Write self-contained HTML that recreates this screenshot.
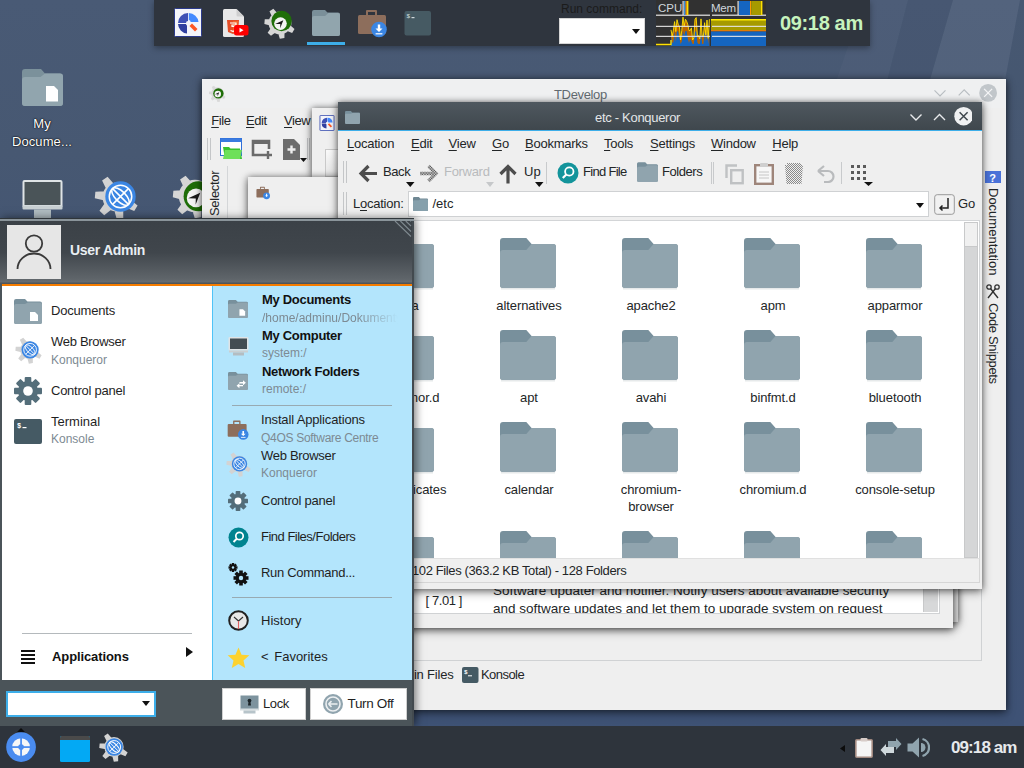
<!DOCTYPE html>
<html><head><meta charset="utf-8">
<style>
*{margin:0;padding:0;box-sizing:border-box}
html,body{width:1024px;height:768px;overflow:hidden}
body{position:relative;font-family:"Liberation Sans",sans-serif;font-size:13px;color:#1f1f1f;
background:linear-gradient(#495a75 0%,#475872 20%,#415374 50%,#3e5275 95%);}
.a{position:absolute}
.t{position:absolute;white-space:nowrap;line-height:1}
#rays{left:0;top:0;width:1024px;height:768px;overflow:hidden}
/* top panel */
#tp{left:154px;top:0;width:716px;height:46px;background:#2f353e;box-shadow:0 2px 6px rgba(0,0,0,.35)}
/* taskbar */
#tb{left:0;top:726px;width:1024px;height:42px;background:#2e343c}
/* windows */
.win{position:absolute;background:#efefef;box-shadow:0 0 6px rgba(0,0,0,.4),0 3px 9px rgba(0,0,0,.45)}
#tdev{left:202px;top:79px;width:804px;height:631px}
#small{left:312px;top:108px;width:200px;height:69px}
#q4os{left:248px;top:177px;width:705px;height:451px}
#q4b{left:262px;top:186px;width:696px;height:435.5px;background:#dadada}
#konq{left:338px;top:102px;width:644px;height:487px}
#menu{left:0;top:218px;width:414px;height:508px;background:#4b5459;box-shadow:2px 0 8px rgba(0,0,0,.5)}
u{text-decoration:underline;text-decoration-thickness:1px;text-underline-offset:1.5px}
</style></head>
<body>
<svg id="rays" class="a" style="left:0;top:0" width="1024" height="768"><polygon points="908,0 953,0 921.3,110 879.4,110" fill="#000" fill-opacity="0.025"/><polygon points="953,0 1020,0 999.5,110 921.3,110" fill="#fff" fill-opacity="0.06"/><polygon points="1020,0 1024,0 1024.0,110 999.5,110" fill="#000" fill-opacity="0.02"/><polygon points="864,0 908,0 879.4,110 826.2,110" fill="#fff" fill-opacity="0.025"/></svg>
<div id="desk" class="a" style="left:0;top:0;width:1024px;height:768px">
<svg class="a" style="left:22px;top:69px" width="41" height="37" viewBox="0 0 41 37"><path d="M0 3 Q0 0 3 0 L19 0 L23 4.5 L38 4.5 Q41 4.5 41 7.5 L41 34 Q41 37 38 37 L3 37 Q0 37 0 34 Z" fill="#7b919b"/><path d="M0 11 Q0 8 3 8 L18.5 8 L23 4.5 L38 4.5 Q41 4.5 41 7.5 L41 34 Q41 37 38 37 L3 37 Q0 37 0 34 Z" fill="#91a5ae"/><path d="M24 17 L32 17 L36 21 L36 32.5 L24 32.5 Z" fill="#fff"/></svg>
<div class="t" style="left:12px;top:117px;width:60px;text-align:center;font-size:13px;color:#fff;text-shadow:0 0 2px #000,0 0 1px #000">My</div>
<div class="t" style="left:8px;top:134.6px;width:68px;text-align:center;font-size:13px;color:#fff;text-shadow:0 0 2px #000,0 0 1px #000;letter-spacing:0.1px">Docume...</div>
<svg class="a" style="left:22px;top:180px" width="41" height="38" viewBox="0 0 41 38"><rect x="0.5" y="0" width="40" height="28" rx="2" fill="#dfe4e6"/><rect x="2.5" y="2" width="36" height="23" fill="#4a5458"/><rect x="0.5" y="25.5" width="40" height="4" rx="1" fill="#c8d0d3"/><rect x="12" y="29.5" width="17" height="8.5" fill="#b0bcc1"/></svg>
<svg class="a" style="left:94.2px;top:174px" width="46" height="46" viewBox="0 0 46 46"><path d="M8.48 23.00 a14.52 14.52 0 1 0 29.04 0 a14.52 14.52 0 1 0 -29.04 0Z M11.35 17.34 L1.37 17.80 L0.80 24.37 L10.54 26.55Z M11.31 28.58 L5.45 36.66 L10.23 41.21 L18.01 34.95Z M20.08 35.62 L22.74 45.24 L29.28 44.34 L29.23 34.35Z M31.04 33.15 L40.23 37.07 L43.60 31.40 L35.76 25.21Z M20.16 10.36 L13.58 2.84 L8.08 6.49 L12.46 15.47Z" fill="#d3d3d3"/><circle cx="26.50" cy="22.50" r="15.20" fill="#3b86e3"/><g fill="none" stroke="#fff" stroke-width="1.52"><circle cx="26.50" cy="22.50" r="11.25"/><ellipse cx="26.50" cy="22.50" rx="5.17" ry="11.25" transform="rotate(-45 26.50 22.50)"/><path d="M18.60 14.60 L34.40 30.40 M18.60 30.40 L34.40 14.60"/></g></svg>
<svg class="a" style="left:172.1px;top:173.4px" width="46" height="46" viewBox="0 0 46 46"><path d="M6.72 23.00 a16.28 16.28 0 1 0 32.56 0 a16.28 16.28 0 1 0 -32.56 0Z M9.81 17.21 L1.37 17.80 L0.80 24.37 L9.01 26.41Z M10.25 29.70 L5.45 36.66 L10.23 41.21 L16.95 36.07Z M20.29 37.14 L22.74 45.24 L29.28 44.34 L29.44 35.88Z M32.37 33.94 L40.23 37.07 L43.60 31.40 L37.09 25.99Z M19.31 9.08 L13.58 2.84 L8.08 6.49 L11.61 14.19Z" fill="#d6d6d6"/><circle cx="26.60" cy="23.30" r="15.00" fill="#1f6e08"/><circle cx="24.08" cy="24.89" r="9.30" fill="#f4f4f4"/><path d="M16.17 25.36 L28.27 19.77 L23.61 31.87 L23.80 25.48Z" fill="#1a1a1a"/></svg>
</div>
<div id="tp" class="a">
<svg class="a" style="left:20px;top:8px" width="28" height="30" viewBox="0 0 28 30">
<rect x="0.5" y="0.5" width="27" height="28" rx="1" fill="#f4f5fa" stroke="#2b3a8c" stroke-width="1"/>
<path d="M14 5 A10 10 0 0 0 4 15 L12 15 A2 2 0 0 1 14 13 Z" fill="#3f51b5"/>
<path d="M14.8 5 A10 10 0 0 1 24.5 14 L16.6 14 A2 2 0 0 0 14.8 12 Z" fill="#448aff"/>
<path d="M4 16 A10 10 0 0 0 13 25.5 L13 17.5 A2 2 0 0 1 12 16 Z" fill="#303f9f"/>
<path d="M15.5 18 L18 15.5 L23.5 21 L21 23.5 Z" fill="#ff5722"/>
</svg>
<svg class="a" style="left:68px;top:9px" width="28" height="29" viewBox="0 0 28 29">
<path d="M1 1.5 Q1 0 2.5 0 L14.5 0 L22 7.5 L22 26.5 Q22 28 20.5 28 L2.5 28 Q1 28 1 26.5 Z" fill="#e8e8e8"/>
<path d="M14.5 0 L14.5 6 Q14.5 7.5 16 7.5 L22 7.5 Z" fill="#cfcfcf"/>
<path d="M5 11 L17 11 L16 23 L11 25 L6 23 Z" fill="#e44d26"/>
<path d="M11 12 L16 12 L15.2 22.5 L11 24 Z" fill="#f16529"/>
<path d="M8 14 L14 14 L14 16 L10 16 L10 17.5 L13.8 17.5 L13.4 21.5 L11 22.3 L8.5 21.5" fill="none" stroke="#fff" stroke-width="1.2"/>
<rect x="12" y="16" width="14.5" height="10.5" rx="2.5" fill="#ff0000"/>
<path d="M17.5 18.8 L21.5 21.2 L17.5 23.6 Z" fill="#fff"/>
</svg>
<svg class="a" style="left:109.4px;top:5.8px" width="34" height="34" viewBox="0 0 34 34"><path d="M5.53 17.00 a11.47 11.47 0 1 0 22.94 0 a11.47 11.47 0 1 0 -22.94 0Z M7.71 12.92 L1.76 13.33 L1.36 17.97 L7.14 19.41Z M8.02 21.72 L4.63 26.63 L8.00 29.83 L12.73 26.21Z M15.09 26.96 L16.82 32.67 L21.42 32.04 L21.54 26.07Z M23.60 24.71 L29.14 26.92 L31.51 22.92 L26.92 19.11Z M14.40 7.19 L10.37 2.80 L6.49 5.37 L8.97 10.79Z" fill="#d6d6d6"/><circle cx="18.60" cy="14.95" r="10.20" fill="#1f6e08"/><circle cx="17.48" cy="17.61" r="6.32" fill="#f4f4f4"/><path d="M12.10 17.93 L20.33 14.13 L17.16 22.35 L17.29 18.01Z" fill="#1a1a1a"/></svg>
<svg class="a" style="left:158px;top:10px" width="28" height="26" viewBox="0 0 28 26">
<path d="M0 2 Q0 0 2 0 L13 0 L15.5 2.5 L26 2.5 Q28 2.5 28 4.5 L28 24 Q28 26 26 26 L2 26 Q0 26 0 24 Z" fill="#7a8f99"/>
<path d="M0 8 Q0 6 2 6 L13 6 L16.5 3 L26 3 Q28 3 28 5 L28 24 Q28 26 26 26 L2 26 Q0 26 0 24 Z" fill="#91a5ad"/>
</svg>
<div class="a" style="left:153px;top:42px;width:38px;height:3px;background:#3daee9"></div>
<svg class="a" style="left:203px;top:9px" width="34" height="30" viewBox="0 0 34 30">
<path d="M9 6 L9 2 Q9 1 10 1 L19 1 Q20 1 20 2 L20 6 L18 6 L18 3 L11 3 L11 6 Z" fill="#8d6e5c"/>
<rect x="1" y="6" width="28" height="19" rx="1.5" fill="#8d6e5c"/>
<circle cx="22" cy="20.5" r="7.8" fill="#3b86e3"/>
<path d="M20.8 15.5 L23.2 15.5 L23.2 19.5 L25.5 19.5 L22 23 L18.5 19.5 L20.8 19.5 Z" fill="#fff"/>
<rect x="18.6" y="24.2" width="6.8" height="1.2" fill="#fff"/>
</svg>
<svg class="a" style="left:250px;top:11px" width="28" height="25" viewBox="0 0 28 25">
<rect x="0.5" y="0" width="26.5" height="24.5" rx="2" fill="#465a63"/>
<text x="2.5" y="7" font-size="6" fill="#dfe6ea" font-family="Liberation Mono">$</text>
<rect x="7.5" y="6" width="3" height="1.2" fill="#cfd8dc"/>
</svg>
<div class="t" style="left:407px;top:3px;font-size:12px;color:#1b1b1b">Run command:</div>
<div class="a" style="left:405px;top:18px;width:86px;height:26px;background:#fff;border:1px solid #d6d6d6"></div>
<svg class="a" style="left:478px;top:29px" width="8" height="6"><path d="M0 0 L8 0 L4 5 Z" fill="#111"/></svg>
<svg class="a" style="left:502px;top:0" width="110" height="46" viewBox="0 0 110 46">
<rect width="110" height="46" fill="#313131"/>
<path d="M15.0 46 L15.0 29.9 L16.2 36.3 L17.4 30.1 L18.6 21.6 L19.8 31.6 L21.0 19.7 L22.2 24.3 L23.4 26.3 L24.6 39.8 L25.8 30.3 L27.0 17.1 L28.2 26.4 L29.4 19.2 L30.6 21.2 L31.8 24.6 L33.0 30.5 L34.2 30.6 L35.4 27.9 L36.6 40.0 L37.8 38.0 L39.0 19.1 L40.2 17.6 L41.4 35.8 L42.6 35.7 L43.8 38.9 L45.0 18.9 L46.2 36.3 L47.4 35.8 L48.6 22.7 L49.8 34.9 L51.0 20.0 L52.2 38.3 L53.4 19.2 L53.4 46 Z" fill="#b86400"/>
<path d="M15.0 46 L15.0 36.7 L16.2 42.7 L17.4 42.5 L18.6 31.0 L19.8 42.0 L21.0 31.0 L22.2 31.8 L23.4 38.1 L24.6 44.0 L25.8 41.5 L27.0 31.0 L28.2 35.8 L29.4 31.0 L30.6 31.0 L31.8 38.3 L33.0 42.9 L34.2 39.1 L35.4 41.0 L36.6 44.0 L37.8 44.0 L39.0 31.9 L40.2 31.0 L41.4 42.6 L42.6 44.0 L43.8 44.0 L45.0 31.0 L46.2 44.0 L47.4 44.0 L48.6 31.0 L49.8 41.5 L51.0 31.0 L52.2 44.0 L53.4 31.0 L53.4 46 Z" fill="#1565c0"/>
<path d="M15.0 29.9 L16.2 36.3 L17.4 30.1 L18.6 21.6 L19.8 31.6 L21.0 19.7 L22.2 24.3 L23.4 26.3 L24.6 39.8 L25.8 30.3 L27.0 17.1 L28.2 26.4 L29.4 19.2 L30.6 21.2 L31.8 24.6 L33.0 30.5 L34.2 30.6 L35.4 27.9 L36.6 40.0 L37.8 38.0 L39.0 19.1 L40.2 17.6 L41.4 35.8 L42.6 35.7 L43.8 38.9 L45.0 18.9 L46.2 36.3 L47.4 35.8 L48.6 22.7 L49.8 34.9 L51.0 20.0 L52.2 38.3 L53.4 19.2" fill="none" stroke="#ffe000" stroke-width="0.9"/>
<path d="M0 44.5 L15 44.5 L15 40" fill="none" stroke="#ffe000" stroke-width="1.4"/>
<rect x="55" y="20" width="55" height="10.5" fill="#a69a00"/>
<rect x="55" y="19" width="55" height="1.5" fill="#ffea00"/>
<rect x="55" y="30.2" width="55" height="1.3" fill="#ff8000"/>
<rect x="55" y="31.5" width="55" height="14.5" fill="#1565c0"/>
<rect x="0" y="14.6" width="54" height="1.2" fill="#e6e6e6"/>
<rect x="56" y="14.6" width="54" height="1.2" fill="#e6e6e6"/>
<rect x="0" y="25.8" width="54" height="1.1" fill="#e6e6e6"/>
<rect x="0" y="35.8" width="54" height="1.1" fill="#e6e6e6"/>
<rect x="56" y="25.8" width="54" height="1.1" fill="#e6e6e6"/>
<rect x="56" y="35.8" width="54" height="1.1" fill="#e6e6e6"/>
<text x="2" y="11.5" font-size="11.5" fill="#cfd6dc" font-family="Liberation Sans">CPU</text>
<rect x="26.5" y="1" width="1.2" height="14" fill="#e6e6e6"/>
<rect x="28" y="1" width="1.6" height="14" fill="#3d8ee0"/>
<rect x="29.6" y="1" width="1.2" height="14" fill="#ff9800"/>
<rect x="30.8" y="1" width="1.6" height="14" fill="#ffe000"/>
<text x="55" y="11.5" font-size="11.5" fill="#cfd6dc" font-family="Liberation Sans" letter-spacing="-0.3">Mem</text>
<rect x="81.5" y="1" width="1.2" height="14" fill="#e6e6e6"/>
<rect x="83" y="1" width="11" height="14" fill="#1565c0"/>
<rect x="94" y="1" width="1.2" height="14" fill="#ff9800"/>
<rect x="95.2" y="1" width="10" height="14" fill="#a69a00"/>
<rect x="105" y="1" width="1.4" height="14" fill="#ffe000"/>
</svg>
<div class="t" style="left:626px;top:13px;font-size:20px;font-weight:bold;color:#c6f3bd;letter-spacing:-0.35px">09:18 am</div>
</div>
<div id="tdev" class="win">
<div class="a" style="left:0;top:0;width:804px;height:29px;background:#eff0f1"></div>
<svg class="a" style="left:5.5px;top:4.5px" width="19" height="19" viewBox="0 0 19 19"><path d="M3.21 9.50 a6.29 6.29 0 1 0 12.58 0 a6.29 6.29 0 1 0 -12.58 0Z M4.41 7.26 L1.14 7.49 L0.92 10.03 L4.09 10.82Z M4.57 12.09 L2.72 14.78 L4.57 16.54 L7.16 14.55Z M8.45 14.96 L9.40 18.09 L11.93 17.75 L11.99 14.48Z M13.12 13.73 L16.16 14.94 L17.46 12.75 L14.94 10.66Z M8.07 4.12 L5.86 1.71 L3.74 3.12 L5.10 6.10Z" fill="#d9d9d9"/><circle cx="10.40" cy="9.40" r="5.20" fill="#1f6e08"/><circle cx="9.77" cy="10.09" r="3.22" fill="#f4f4f4"/><path d="M7.03 10.26 L11.22 8.32 L9.61 12.51 L9.67 10.30Z" fill="#1a1a1a"/></svg>
<div class="t" style="left:352.00px;top:9.10px;font-size:13px;color:#626a70;letter-spacing:-0.35px">TDevelop</div>
<svg class="a" style="left:730px;top:4px" width="70" height="24" viewBox="0 -4 70 24"><path d="M2.5 3.3 L8 8.8 L13.5 3.3" fill="none" stroke="#b9bec2" stroke-width="1.2"/><path d="M26.7 8.3 L32.2 2.8 L37.7 8.3" fill="none" stroke="#b9bec2" stroke-width="1.2"/><circle cx="56.1" cy="5.9" r="8.9" fill="#c1c6ca"/><path d="M52.1 1.9 L60.1 9.9 M60.1 1.9 L52.1 9.9" stroke="#f4f5f6" stroke-width="1.3"/></svg>
<div class="t" style="left:9.25px;top:34.70px;font-size:13px;color:#232627;letter-spacing:-0.4px"><u>F</u>ile</div>
<div class="t" style="left:44.00px;top:34.70px;font-size:13px;color:#232627;letter-spacing:-0.4px"><u>E</u>dit</div>
<div class="t" style="left:82.00px;top:34.70px;font-size:13px;color:#232627;letter-spacing:-0.4px"><u>V</u>iew</div>
<div class="a" style="left:5px;top:59px;width:4px;height:22px;border-left:1px solid #c4c6c8;border-right:1px solid #c4c6c8"></div>
<svg class="a" style="left:18px;top:59px" width="23" height="22" viewBox="0 0 23 22"><rect x="0.5" y="0.5" width="21" height="17" fill="#fff" stroke="#2f6fd8" stroke-width="1"/><rect x="0.5" y="0.5" width="21" height="3.5" fill="#3a7be0"/><path d="M3 9 L9 9 L10.5 10.5 L20 10.5 L22 21 L5 21 Z" fill="#39c12f"/><path d="M5 12 L22 12 L20 21 L3 21 Z" fill="#6ee05a"/></svg>
<svg class="a" style="left:49px;top:60px" width="22" height="20" viewBox="0 0 22 20"><path d="M13 16 L2 16 L2 2 L18 2 L18 10" fill="none" stroke="#6b6b6b" stroke-width="2.6"/><rect x="2" y="2" width="16" height="3" fill="#6b6b6b"/><path d="M17 12 L17 20 M13 16 L21 16" stroke="#6b6b6b" stroke-width="2.4"/></svg>
<svg class="a" style="left:81px;top:60px" width="26" height="25" viewBox="0 0 26 25"><path d="M0 0 L11 0 L17 6 L17 21 L0 21 Z" fill="#6d6d6d"/><path d="M8.5 6.5 L8.5 14.5 M4.5 10.5 L12.5 10.5" stroke="#eee" stroke-width="2.4"/><path d="M17 19 L24 19 L20.5 23 Z" fill="#111"/></svg>
<div class="a" style="left:105px;top:59px;width:3px;height:22px;border-left:1px solid #c4c6c8;border-right:1px solid #c4c6c8"></div>
<div class="a" style="left:25px;top:87px;width:1px;height:60px;background:#d4d6d8"></div>
<div class="t" style="left:15.5px;top:91px;font-size:13px;color:#232627;transform-origin:0 0;transform:rotate(-90deg) translate(-46px,-10px);letter-spacing:-0.3px">Selector</div>
<svg class="a" style="left:783px;top:92px" width="16" height="12" viewBox="0 0 16 12"><rect width="16" height="12" fill="#4a72d8"/><text x="4.3" y="10.5" font-size="11" font-weight="bold" fill="#fff" font-family="Liberation Sans">?</text></svg>
<div class="t" style="left:798px;top:109px;font-size:13px;color:#232627;transform-origin:0 0;transform:rotate(90deg);letter-spacing:0px">Documentation</div>
<svg class="a" style="left:784px;top:205px" width="14" height="15" viewBox="0 0 14 15"><circle cx="3" cy="3" r="2.2" fill="none" stroke="#333" stroke-width="1.3"/><circle cx="11" cy="3" r="2.2" fill="none" stroke="#333" stroke-width="1.3"/><path d="M4.5 4.5 L12 14 M9.5 4.5 L2 14" stroke="#333" stroke-width="1.4"/></svg>
<div class="t" style="left:798px;top:223.5px;font-size:13px;color:#232627;transform-origin:0 0;transform:rotate(90deg);letter-spacing:-0.35px">Code Snippets</div>
<div class="a" style="left:0;top:581px;width:780px;height:1px;background:#d0d2d4"></div>
<div class="a" style="left:779px;top:90px;width:1px;height:491px;background:#d0d2d4"></div>
<div class="t" style="left:184px;top:589.00px;font-size:13px;color:#232627;letter-spacing:-0.2px">Find in Files</div>
<svg class="a" style="left:260px;top:588px" width="17" height="16" viewBox="0 0 17 16"><rect width="16.5" height="16" rx="2" fill="#455a64"/><text x="2" y="7" font-size="6" fill="#fff" font-family="Liberation Mono" font-weight="bold">$</text><rect x="6" y="8.3" width="4" height="1" fill="#fff"/></svg>
<div class="t" style="left:279.00px;top:589.00px;font-size:13px;color:#232627;letter-spacing:-0.55px">Konsole</div>
</div>
<div id="small" class="win">
<svg class="a" style="left:7px;top:7px" width="16" height="16" viewBox="0 0 28 30"><rect x="0.8" y="0.8" width="26.4" height="28.4" rx="1" fill="#f4f5fa" stroke="#3b4fb0" stroke-width="1.6"/><path d="M14 5 A10 10 0 0 0 4 15 L12 15 A2 2 0 0 1 14 13 Z" fill="#3f51b5"/><path d="M14.8 5 A10 10 0 0 1 24.5 14 L16.6 14 A2 2 0 0 0 14.8 12 Z" fill="#448aff"/><path d="M4 16 A10 10 0 0 0 13 25.5 L13 17.5 A2 2 0 0 1 12 16 Z" fill="#303f9f"/><path d="M15.5 18 L18 15.5 L23.5 21 L21 23.5 Z" fill="#ff5722"/></svg>
<div class="a" style="left:13px;top:41px;width:40px;height:28px;background:linear-gradient(#fafafa,#e4e4e4);border:1px solid #c9c9c9"></div>
</div>
<div id="q4b" class="win"></div>
<div id="q4os" class="win">
<svg class="a" style="left:8px;top:9px" width="15" height="14" viewBox="0 0 34 30"><path d="M9 6 L9 2 Q9 1 10 1 L19 1 Q20 1 20 2 L20 6 L18 6 L18 3 L11 3 L11 6 Z" fill="#8d6e5c"/><rect x="1" y="6" width="28" height="19" rx="1.5" fill="#8d6e5c"/><circle cx="24" cy="21.5" r="7.8" fill="#3b86e3"/><path d="M22.8 16.5 L25.2 16.5 L25.2 20.5 L27.5 20.5 L24 24 L20.5 20.5 L22.8 20.5 Z" fill="#fff"/></svg>
<div class="a" style="left:160px;top:407px;width:532px;height:30px;background:#fff;border-bottom:1px solid #d0d2d4;border-right:1px solid #d0d2d4;overflow:hidden">
<div class="t" style="left:17.5px;top:9.5px;font-size:13px;color:#232627;letter-spacing:-0.4px">[ 7.01 ]</div>
<div class="t" style="left:85px;top:0.3px;font-size:13.5px;color:#232627;letter-spacing:0px">Software updater and notifier. Notify users about available security</div>
<div class="t" style="left:85px;top:18.3px;font-size:13.5px;color:#232627;letter-spacing:0px">and software updates and let them to upgrade system on request</div>
<div class="a" style="left:515px;top:0;width:15px;height:27.5px;background:#d7d8d9;border-left:1px solid #c8c9ca"></div>
</div>
</div>
<div id="konq" class="win">
<div class="a" style="left:0;top:0;width:644px;height:28px;background:linear-gradient(#4f585f,#3f474d)"></div>
<div class="a" style="left:0;top:28px;width:644px;height:1px;background:#3daee9"></div>
<svg class="a" style="left:7px;top:9px" width="15" height="13" viewBox="0 0 28 23" preserveAspectRatio="none"><path d="M0 2 Q0 0 2 0 L11 0 L13.5 2.5 L26 2.5 Q28 2.5 28 4.5 L28 21 Q28 23 26 23 L2 23 Q0 23 0 21 Z" fill="#78909c"/><path d="M0 7 Q0 5 2 5 L11 5 L14 3.5 L26 3.5 Q28 3.5 28 5.5 L28 21 Q28 23 26 23 L2 23 Q0 23 0 21 Z" fill="#90a4ae"/></svg>
<div class="t" style="left:257.00px;top:9.30px;font-size:13px;color:#e3e6e8;letter-spacing:-0.3px">etc - Konqueror</div>
<svg class="a" style="left:570px;top:4px" width="64" height="22" viewBox="0 0 64 22"><path d="M2.5 8.5 L8 14 L13.5 8.5" fill="none" stroke="#e8eaec" stroke-width="1.4"/><path d="M26 14 L31.5 8.5 L37 14" fill="none" stroke="#e8eaec" stroke-width="1.4"/><circle cx="55.6" cy="10.2" r="9.3" fill="#f0f1f2"/><path d="M51.6 6.2 L59.6 14.2 M59.6 6.2 L51.6 14.2" stroke="#3f474d" stroke-width="1.5"/></svg>
<div class="t" style="left:9.00px;top:35.40px;font-size:13px;color:#232627;letter-spacing:-0.25px"><u>L</u>ocation</div>
<div class="t" style="left:73.00px;top:35.40px;font-size:13px;color:#232627;letter-spacing:-0.25px"><u>E</u>dit</div>
<div class="t" style="left:110.60px;top:35.40px;font-size:13px;color:#232627;letter-spacing:-0.25px"><u>V</u>iew</div>
<div class="t" style="left:154.00px;top:35.40px;font-size:13px;color:#232627;letter-spacing:-0.25px"><u>G</u>o</div>
<div class="t" style="left:187.00px;top:35.40px;font-size:13px;color:#232627;letter-spacing:-0.25px"><u>B</u>ookmarks</div>
<div class="t" style="left:266.00px;top:35.40px;font-size:13px;color:#232627;letter-spacing:-0.25px"><u>T</u>ools</div>
<div class="t" style="left:312.00px;top:35.40px;font-size:13px;color:#232627;letter-spacing:-0.25px"><u>S</u>ettings</div>
<div class="t" style="left:373.00px;top:35.40px;font-size:13px;color:#232627;letter-spacing:-0.25px"><u>W</u>indow</div>
<div class="t" style="left:434.30px;top:35.40px;font-size:13px;color:#232627;letter-spacing:-0.25px"><u>H</u>elp</div>
<div class="a" style="left:5px;top:59px;width:4px;height:22px;border-left:1px solid #c4c6c8;border-right:1px solid #c4c6c8"></div>
<div class="a" style="left:5px;top:90px;width:4px;height:23px;border-left:1px solid #c4c6c8;border-right:1px solid #c4c6c8"></div>
<svg class="a" style="left:20px;top:61px" width="20" height="21" viewBox="0 0 20 21"><path d="M19 10.5 L4 10.5 M10.5 3 L3 10.5 L10.5 18" fill="none" stroke="#4d4d4d" stroke-width="3.2"/></svg>
<div class="t" style="left:45.00px;top:62.70px;font-size:13px;color:#232627;letter-spacing:-0.4px">Back</div>
<svg class="a" style="left:67.5px;top:79.5px" width="9" height="5"><path d="M0 0 L8.5 0 L4.25 5 Z" fill="#111"/></svg>
<svg class="a" style="left:81px;top:61px" width="20" height="21" viewBox="0 0 20 21"><defs><pattern id="chk2" width="1.6" height="1.6" patternUnits="userSpaceOnUse"><rect width="0.8" height="0.8" fill="#3a3a3a"/><rect x="0.8" y="0.8" width="0.8" height="0.8" fill="#3a3a3a"/></pattern></defs><path d="M1 10.5 L16 10.5 M9.5 3 L17 10.5 L9.5 18" fill="none" stroke="url(#chk2)" stroke-width="3.4"/></svg>
<div class="t" style="left:106.00px;top:62.70px;font-size:13px;color:#b9bbbd;letter-spacing:-0.3px">Forward</div>
<svg class="a" style="left:148px;top:79.5px" width="9" height="5"><path d="M0 0 L8 0 L4 5 Z" fill="#c6c8ca"/></svg>
<svg class="a" style="left:160px;top:61px" width="20" height="21" viewBox="0 0 20 21"><path d="M10 20.5 L10 4 M2.5 11 L10 3.5 L17.5 11" fill="none" stroke="#4d4d4d" stroke-width="3.2"/></svg>
<div class="t" style="left:186.00px;top:62.70px;font-size:13px;color:#232627;">Up</div>
<svg class="a" style="left:197px;top:79.5px" width="9" height="5"><path d="M0 0 L8.5 0 L4.25 5 Z" fill="#111"/></svg>
<div class="a" style="left:208px;top:60px;width:1px;height:22px;background:#c8cacc"></div>
<svg class="a" style="left:219px;top:60px" width="22" height="22" viewBox="0 0 22 22"><circle cx="11" cy="11" r="10.5" fill="#13949b"/><circle cx="12.3" cy="9.5" r="4.2" fill="none" stroke="#fff" stroke-width="1.8"/><path d="M9.5 12.3 L5.8 16" stroke="#fff" stroke-width="2.2"/></svg>
<div class="t" style="left:245.00px;top:63.20px;font-size:13px;color:#232627;letter-spacing:-0.7px">Find File</div>
<svg class="a" style="left:299px;top:60px" width="21" height="20" viewBox="0 0 28 26"><path d="M0 2 Q0 0 2 0 L11 0 L13.5 2.5 L26 2.5 Q28 2.5 28 4.5 L28 24 Q28 26 26 26 L2 26 Q0 26 0 24 Z" fill="#78909c"/><path d="M0 8 Q0 6 2 6 L11 6 L14 4 L26 4 Q28 4 28 6 L28 24 Q28 26 26 26 L2 26 Q0 26 0 24 Z" fill="#90a4ae"/></svg>
<div class="t" style="left:324.00px;top:63.20px;font-size:13px;color:#232627;letter-spacing:-0.45px">Folders</div>
<div class="a" style="left:373px;top:60px;width:3px;height:22px;border-left:1px solid #c8cacc;border-right:1px solid #c8cacc"></div>
<svg class="a" style="left:387px;top:62px" width="20" height="21" viewBox="0 0 20 21"><path d="M1.5 14 L1.5 1.5 L12 1.5" fill="none" stroke="#c0c2c4" stroke-width="2.4"/><rect x="6.2" y="6.2" width="11.5" height="13" fill="none" stroke="#bfc1c3" stroke-width="2.4"/></svg>
<svg class="a" style="left:416px;top:60px" width="20" height="23" viewBox="0 0 20 23"><rect x="1.2" y="3.2" width="17.6" height="18.6" fill="#f7f7f7" stroke="#9e857a" stroke-width="2.4"/><rect x="6" y="1" width="8" height="4" rx="1" fill="#cfcfcf"/><path d="M5 10 H15 M5 13 H15 M5 16 H15" stroke="#c6c6c6" stroke-width="1"/></svg>
<svg class="a" style="left:447px;top:61px" width="18" height="21" viewBox="0 0 18 21"><defs><pattern id="chk" width="2" height="2" patternUnits="userSpaceOnUse"><rect width="1" height="1" fill="#8a8a8a"/><rect x="1" y="1" width="1" height="1" fill="#8a8a8a"/></pattern></defs><path d="M0 2 L18 2 L16.5 21 L1.5 21 Z" fill="url(#chk)"/><rect x="2" y="0" width="14" height="2" fill="url(#chk)"/></svg>
<svg class="a" style="left:478px;top:63px" width="20" height="18" viewBox="0 0 20 18"><path d="M2 6 L8 1 M2 6 L8 11 M2 6 L12 6 A5.5 5.5 0 0 1 12 17 L8 17" fill="none" stroke="#b9bbbd" stroke-width="2.2"/></svg>
<div class="a" style="left:503px;top:60px;width:1px;height:22px;background:#c8cacc"></div>
<svg class="a" style="left:512px;top:61px" width="24" height="24" viewBox="0 0 24 24"><g fill="#5a5a5a"><rect x="1" y="2" width="3" height="3"/><rect x="7" y="2" width="3" height="3"/><rect x="13" y="2" width="3" height="3"/><rect x="1" y="8" width="3" height="3"/><rect x="7" y="8" width="3" height="3"/><rect x="13" y="8" width="3" height="3"/><rect x="1" y="14" width="3" height="3"/><rect x="7" y="14" width="3" height="3"/><rect x="13" y="14" width="3" height="3"/></g><path d="M14 19 L23 19 L18.5 23 Z" fill="#111"/></svg>
<div class="t" style="left:15.00px;top:94.90px;font-size:13px;color:#232627;letter-spacing:-0.25px">L<u>o</u>cation:</div>
<div class="a" style="left:70px;top:89px;width:521px;height:26px;background:#fff;border:1px solid #cfd1d3"></div>
<svg class="a" style="left:75px;top:95px" width="15" height="14" viewBox="0 0 28 26"><path d="M0 2 Q0 0 2 0 L11 0 L13.5 2.5 L26 2.5 Q28 2.5 28 4.5 L28 24 Q28 26 26 26 L2 26 Q0 26 0 24 Z" fill="#6f8793"/><path d="M0 8 Q0 6 2 6 L11 6 L14 4 L26 4 Q28 4 28 6 L28 24 Q28 26 26 26 L2 26 Q0 26 0 24 Z" fill="#86a0ac"/></svg>
<div class="t" style="left:94.50px;top:95.00px;font-size:13px;color:#232627;">/etc</div>
<svg class="a" style="left:578px;top:101px" width="9" height="6"><path d="M0 0 L8 0 L4 5 Z" fill="#111"/></svg>
<svg class="a" style="left:596px;top:92px" width="21" height="21" viewBox="0 0 21 21"><rect x="0.7" y="0.7" width="19.6" height="19.6" rx="2.5" fill="#f1f1f1" stroke="#9a9a9a" stroke-width="1"/><path d="M14 4 L14 14 L6 14 M8.5 11.5 L6 14 L8.5 16.5" fill="none" stroke="#222" stroke-width="1.5"/></svg>
<div class="t" style="left:620.00px;top:94.50px;font-size:13px;color:#232627;">Go</div>
<div class="a" style="left:0;top:118px;width:642px;height:338px;background:#fff;border-top:1px solid #d3d5d7;border-right:1px solid #d3d5d7"></div>
<div class="a" style="left:626px;top:120px;width:14px;height:336px;background:#d5d6d7;border:1px solid #c8c9ca"></div>
<div class="a" style="left:626px;top:120px;width:14px;height:25px;background:#f0f0f0;border:1px solid #c8c9ca"></div>
<svg class="a" style="left:40.0px;top:136.0px" width="57" height="52" viewBox="0 0 57 52"><path d="M0 3 Q0 0 3 0 L26.3 0 L31.6 6 L53 6 Q56 6 56 9 L56 47 Q56 50 53 50 L3 50 Q0 50 0 47 Z" fill="#78909c"/><path d="M0 15 Q0 12 3 12 L26.3 12 L31.6 6 L53 6 Q56 6 56 9 L56 47 Q56 50 53 50 L3 50 Q0 50 0 47 Z" fill="#90a4ae"/><rect x="1" y="50" width="54" height="1.5" fill="#e6e9ea"/></svg>
<div class="t" style="left:9.00px;width:120px;text-align:center;top:196.50px;font-size:13px;color:#232627;letter-spacing:-0.1px">alsa</div>
<svg class="a" style="left:162.0px;top:136.0px" width="57" height="52" viewBox="0 0 57 52"><path d="M0 3 Q0 0 3 0 L26.3 0 L31.6 6 L53 6 Q56 6 56 9 L56 47 Q56 50 53 50 L3 50 Q0 50 0 47 Z" fill="#78909c"/><path d="M0 15 Q0 12 3 12 L26.3 12 L31.6 6 L53 6 Q56 6 56 9 L56 47 Q56 50 53 50 L3 50 Q0 50 0 47 Z" fill="#90a4ae"/><rect x="1" y="50" width="54" height="1.5" fill="#e6e9ea"/></svg>
<div class="t" style="left:131.00px;width:120px;text-align:center;top:196.50px;font-size:13px;color:#232627;letter-spacing:-0.1px">alternatives</div>
<svg class="a" style="left:284.0px;top:136.0px" width="57" height="52" viewBox="0 0 57 52"><path d="M0 3 Q0 0 3 0 L26.3 0 L31.6 6 L53 6 Q56 6 56 9 L56 47 Q56 50 53 50 L3 50 Q0 50 0 47 Z" fill="#78909c"/><path d="M0 15 Q0 12 3 12 L26.3 12 L31.6 6 L53 6 Q56 6 56 9 L56 47 Q56 50 53 50 L3 50 Q0 50 0 47 Z" fill="#90a4ae"/><rect x="1" y="50" width="54" height="1.5" fill="#e6e9ea"/></svg>
<div class="t" style="left:253.00px;width:120px;text-align:center;top:196.50px;font-size:13px;color:#232627;letter-spacing:-0.1px">apache2</div>
<svg class="a" style="left:406.0px;top:136.0px" width="57" height="52" viewBox="0 0 57 52"><path d="M0 3 Q0 0 3 0 L26.3 0 L31.6 6 L53 6 Q56 6 56 9 L56 47 Q56 50 53 50 L3 50 Q0 50 0 47 Z" fill="#78909c"/><path d="M0 15 Q0 12 3 12 L26.3 12 L31.6 6 L53 6 Q56 6 56 9 L56 47 Q56 50 53 50 L3 50 Q0 50 0 47 Z" fill="#90a4ae"/><rect x="1" y="50" width="54" height="1.5" fill="#e6e9ea"/></svg>
<div class="t" style="left:375.00px;width:120px;text-align:center;top:196.50px;font-size:13px;color:#232627;letter-spacing:-0.1px">apm</div>
<svg class="a" style="left:528.0px;top:136.0px" width="57" height="52" viewBox="0 0 57 52"><path d="M0 3 Q0 0 3 0 L26.3 0 L31.6 6 L53 6 Q56 6 56 9 L56 47 Q56 50 53 50 L3 50 Q0 50 0 47 Z" fill="#78909c"/><path d="M0 15 Q0 12 3 12 L26.3 12 L31.6 6 L53 6 Q56 6 56 9 L56 47 Q56 50 53 50 L3 50 Q0 50 0 47 Z" fill="#90a4ae"/><rect x="1" y="50" width="54" height="1.5" fill="#e6e9ea"/></svg>
<div class="t" style="left:497.00px;width:120px;text-align:center;top:196.50px;font-size:13px;color:#232627;letter-spacing:-0.1px">apparmor</div>
<svg class="a" style="left:40.0px;top:228.0px" width="57" height="52" viewBox="0 0 57 52"><path d="M0 3 Q0 0 3 0 L26.3 0 L31.6 6 L53 6 Q56 6 56 9 L56 47 Q56 50 53 50 L3 50 Q0 50 0 47 Z" fill="#78909c"/><path d="M0 15 Q0 12 3 12 L26.3 12 L31.6 6 L53 6 Q56 6 56 9 L56 47 Q56 50 53 50 L3 50 Q0 50 0 47 Z" fill="#90a4ae"/><rect x="1" y="50" width="54" height="1.5" fill="#e6e9ea"/></svg>
<div class="t" style="left:9.00px;width:120px;text-align:center;top:288.50px;font-size:13px;color:#232627;letter-spacing:-0.1px">apparmor.d</div>
<svg class="a" style="left:162.0px;top:228.0px" width="57" height="52" viewBox="0 0 57 52"><path d="M0 3 Q0 0 3 0 L26.3 0 L31.6 6 L53 6 Q56 6 56 9 L56 47 Q56 50 53 50 L3 50 Q0 50 0 47 Z" fill="#78909c"/><path d="M0 15 Q0 12 3 12 L26.3 12 L31.6 6 L53 6 Q56 6 56 9 L56 47 Q56 50 53 50 L3 50 Q0 50 0 47 Z" fill="#90a4ae"/><rect x="1" y="50" width="54" height="1.5" fill="#e6e9ea"/></svg>
<div class="t" style="left:131.00px;width:120px;text-align:center;top:288.50px;font-size:13px;color:#232627;letter-spacing:-0.1px">apt</div>
<svg class="a" style="left:284.0px;top:228.0px" width="57" height="52" viewBox="0 0 57 52"><path d="M0 3 Q0 0 3 0 L26.3 0 L31.6 6 L53 6 Q56 6 56 9 L56 47 Q56 50 53 50 L3 50 Q0 50 0 47 Z" fill="#78909c"/><path d="M0 15 Q0 12 3 12 L26.3 12 L31.6 6 L53 6 Q56 6 56 9 L56 47 Q56 50 53 50 L3 50 Q0 50 0 47 Z" fill="#90a4ae"/><rect x="1" y="50" width="54" height="1.5" fill="#e6e9ea"/></svg>
<div class="t" style="left:253.00px;width:120px;text-align:center;top:288.50px;font-size:13px;color:#232627;letter-spacing:-0.1px">avahi</div>
<svg class="a" style="left:406.0px;top:228.0px" width="57" height="52" viewBox="0 0 57 52"><path d="M0 3 Q0 0 3 0 L26.3 0 L31.6 6 L53 6 Q56 6 56 9 L56 47 Q56 50 53 50 L3 50 Q0 50 0 47 Z" fill="#78909c"/><path d="M0 15 Q0 12 3 12 L26.3 12 L31.6 6 L53 6 Q56 6 56 9 L56 47 Q56 50 53 50 L3 50 Q0 50 0 47 Z" fill="#90a4ae"/><rect x="1" y="50" width="54" height="1.5" fill="#e6e9ea"/></svg>
<div class="t" style="left:375.00px;width:120px;text-align:center;top:288.50px;font-size:13px;color:#232627;letter-spacing:-0.1px">binfmt.d</div>
<svg class="a" style="left:528.0px;top:228.0px" width="57" height="52" viewBox="0 0 57 52"><path d="M0 3 Q0 0 3 0 L26.3 0 L31.6 6 L53 6 Q56 6 56 9 L56 47 Q56 50 53 50 L3 50 Q0 50 0 47 Z" fill="#78909c"/><path d="M0 15 Q0 12 3 12 L26.3 12 L31.6 6 L53 6 Q56 6 56 9 L56 47 Q56 50 53 50 L3 50 Q0 50 0 47 Z" fill="#90a4ae"/><rect x="1" y="50" width="54" height="1.5" fill="#e6e9ea"/></svg>
<div class="t" style="left:497.00px;width:120px;text-align:center;top:288.50px;font-size:13px;color:#232627;letter-spacing:-0.1px">bluetooth</div>
<svg class="a" style="left:40.0px;top:320.0px" width="57" height="52" viewBox="0 0 57 52"><path d="M0 3 Q0 0 3 0 L26.3 0 L31.6 6 L53 6 Q56 6 56 9 L56 47 Q56 50 53 50 L3 50 Q0 50 0 47 Z" fill="#78909c"/><path d="M0 15 Q0 12 3 12 L26.3 12 L31.6 6 L53 6 Q56 6 56 9 L56 47 Q56 50 53 50 L3 50 Q0 50 0 47 Z" fill="#90a4ae"/><rect x="1" y="50" width="54" height="1.5" fill="#e6e9ea"/></svg>
<div class="t" style="left:9.00px;width:120px;text-align:center;top:380.50px;font-size:13px;color:#232627;letter-spacing:-0.1px">ca-certificates</div>
<svg class="a" style="left:162.0px;top:320.0px" width="57" height="52" viewBox="0 0 57 52"><path d="M0 3 Q0 0 3 0 L26.3 0 L31.6 6 L53 6 Q56 6 56 9 L56 47 Q56 50 53 50 L3 50 Q0 50 0 47 Z" fill="#78909c"/><path d="M0 15 Q0 12 3 12 L26.3 12 L31.6 6 L53 6 Q56 6 56 9 L56 47 Q56 50 53 50 L3 50 Q0 50 0 47 Z" fill="#90a4ae"/><rect x="1" y="50" width="54" height="1.5" fill="#e6e9ea"/></svg>
<div class="t" style="left:131.00px;width:120px;text-align:center;top:380.50px;font-size:13px;color:#232627;letter-spacing:-0.1px">calendar</div>
<svg class="a" style="left:284.0px;top:320.0px" width="57" height="52" viewBox="0 0 57 52"><path d="M0 3 Q0 0 3 0 L26.3 0 L31.6 6 L53 6 Q56 6 56 9 L56 47 Q56 50 53 50 L3 50 Q0 50 0 47 Z" fill="#78909c"/><path d="M0 15 Q0 12 3 12 L26.3 12 L31.6 6 L53 6 Q56 6 56 9 L56 47 Q56 50 53 50 L3 50 Q0 50 0 47 Z" fill="#90a4ae"/><rect x="1" y="50" width="54" height="1.5" fill="#e6e9ea"/></svg>
<div class="t" style="left:253.00px;width:120px;text-align:center;top:380.50px;font-size:13px;color:#232627;letter-spacing:-0.1px">chromium-</div>
<svg class="a" style="left:406.0px;top:320.0px" width="57" height="52" viewBox="0 0 57 52"><path d="M0 3 Q0 0 3 0 L26.3 0 L31.6 6 L53 6 Q56 6 56 9 L56 47 Q56 50 53 50 L3 50 Q0 50 0 47 Z" fill="#78909c"/><path d="M0 15 Q0 12 3 12 L26.3 12 L31.6 6 L53 6 Q56 6 56 9 L56 47 Q56 50 53 50 L3 50 Q0 50 0 47 Z" fill="#90a4ae"/><rect x="1" y="50" width="54" height="1.5" fill="#e6e9ea"/></svg>
<div class="t" style="left:375.00px;width:120px;text-align:center;top:380.50px;font-size:13px;color:#232627;letter-spacing:-0.1px">chromium.d</div>
<svg class="a" style="left:528.0px;top:320.0px" width="57" height="52" viewBox="0 0 57 52"><path d="M0 3 Q0 0 3 0 L26.3 0 L31.6 6 L53 6 Q56 6 56 9 L56 47 Q56 50 53 50 L3 50 Q0 50 0 47 Z" fill="#78909c"/><path d="M0 15 Q0 12 3 12 L26.3 12 L31.6 6 L53 6 Q56 6 56 9 L56 47 Q56 50 53 50 L3 50 Q0 50 0 47 Z" fill="#90a4ae"/><rect x="1" y="50" width="54" height="1.5" fill="#e6e9ea"/></svg>
<div class="t" style="left:497.00px;width:120px;text-align:center;top:380.50px;font-size:13px;color:#232627;letter-spacing:-0.1px">console-setup</div>
<svg class="a" style="left:40.0px;top:429.0px" width="57" height="52" viewBox="0 0 57 52"><path d="M0 3 Q0 0 3 0 L26.3 0 L31.6 6 L53 6 Q56 6 56 9 L56 47 Q56 50 53 50 L3 50 Q0 50 0 47 Z" fill="#78909c"/><path d="M0 15 Q0 12 3 12 L26.3 12 L31.6 6 L53 6 Q56 6 56 9 L56 47 Q56 50 53 50 L3 50 Q0 50 0 47 Z" fill="#90a4ae"/><rect x="1" y="50" width="54" height="1.5" fill="#e6e9ea"/></svg>
<svg class="a" style="left:162.0px;top:429.0px" width="57" height="52" viewBox="0 0 57 52"><path d="M0 3 Q0 0 3 0 L26.3 0 L31.6 6 L53 6 Q56 6 56 9 L56 47 Q56 50 53 50 L3 50 Q0 50 0 47 Z" fill="#78909c"/><path d="M0 15 Q0 12 3 12 L26.3 12 L31.6 6 L53 6 Q56 6 56 9 L56 47 Q56 50 53 50 L3 50 Q0 50 0 47 Z" fill="#90a4ae"/><rect x="1" y="50" width="54" height="1.5" fill="#e6e9ea"/></svg>
<svg class="a" style="left:284.0px;top:429.0px" width="57" height="52" viewBox="0 0 57 52"><path d="M0 3 Q0 0 3 0 L26.3 0 L31.6 6 L53 6 Q56 6 56 9 L56 47 Q56 50 53 50 L3 50 Q0 50 0 47 Z" fill="#78909c"/><path d="M0 15 Q0 12 3 12 L26.3 12 L31.6 6 L53 6 Q56 6 56 9 L56 47 Q56 50 53 50 L3 50 Q0 50 0 47 Z" fill="#90a4ae"/><rect x="1" y="50" width="54" height="1.5" fill="#e6e9ea"/></svg>
<svg class="a" style="left:406.0px;top:429.0px" width="57" height="52" viewBox="0 0 57 52"><path d="M0 3 Q0 0 3 0 L26.3 0 L31.6 6 L53 6 Q56 6 56 9 L56 47 Q56 50 53 50 L3 50 Q0 50 0 47 Z" fill="#78909c"/><path d="M0 15 Q0 12 3 12 L26.3 12 L31.6 6 L53 6 Q56 6 56 9 L56 47 Q56 50 53 50 L3 50 Q0 50 0 47 Z" fill="#90a4ae"/><rect x="1" y="50" width="54" height="1.5" fill="#e6e9ea"/></svg>
<svg class="a" style="left:528.0px;top:429.0px" width="57" height="52" viewBox="0 0 57 52"><path d="M0 3 Q0 0 3 0 L26.3 0 L31.6 6 L53 6 Q56 6 56 9 L56 47 Q56 50 53 50 L3 50 Q0 50 0 47 Z" fill="#78909c"/><path d="M0 15 Q0 12 3 12 L26.3 12 L31.6 6 L53 6 Q56 6 56 9 L56 47 Q56 50 53 50 L3 50 Q0 50 0 47 Z" fill="#90a4ae"/><rect x="1" y="50" width="54" height="1.5" fill="#e6e9ea"/></svg>
<div class="t" style="left:253.00px;width:120px;text-align:center;top:397.50px;font-size:13px;color:#232627;letter-spacing:-0.1px">browser</div>
<div class="a" style="left:0;top:456px;width:642px;height:25px;background:#efefef;border-top:1px solid #e0e0e0;border-bottom:1px solid #d6d6d6;border-right:1px solid #d6d6d6"></div>
<div class="t" style="left:74.00px;top:462.00px;font-size:13px;color:#232627;letter-spacing:-0.38px">102 Files (363.2 KB Total) - 128 Folders</div>
</div>
<div id="menu" class="a">
<div class="a" style="left:0;top:0;width:414px;height:1px;background:#2f353a"></div>
<div class="a" style="left:0;top:1px;width:414px;height:2px;background:#8a949a"></div>
<div class="a" style="left:0;top:3px;width:414px;height:63px;background:linear-gradient(#3b4147 0%,#40464c 50%,#5f656a 92%,#656b70 96%,#4a5055 100%)"></div>
<svg class="a" style="left:393px;top:3px" width="19" height="17" viewBox="0 0 19 17"><path d="M2 0 L18 15.5 M7.4 0 L18 10.5 M12.8 0 L18 5 M17.5 0 L18 0.5" stroke="#7f898f" stroke-width="1.1"/></svg>
<div class="a" style="left:7px;top:7px;width:54px;height:54px;background:#e6e6e6"></div>
<svg class="a" style="left:7px;top:7px" width="54" height="54" viewBox="0 0 54 54">
<circle cx="27" cy="18.5" r="8.2" fill="none" stroke="#3a3a3a" stroke-width="1.8"/>
<path d="M10.5 44 A16.5 15.5 0 0 1 43.5 44" fill="none" stroke="#3a3a3a" stroke-width="1.8"/>
</svg>
<div class="t" style="left:70px;top:25.4px;font-size:14px;font-weight:bold;color:#e9eef2;letter-spacing:-0.3px">User Admin</div>
<div class="a" style="left:2px;top:66px;width:412px;height:2px;background:#f57c00"></div>
<div class="a" style="left:2px;top:68px;width:210px;height:394px;background:#fff"></div>
<div class="a" style="left:212px;top:68px;width:200px;height:394px;background:#b3e5fc;border-left:1px solid #4fc3f7"></div>
<div class="a" style="left:0;top:462px;width:414px;height:46px;background:#4b5459"></div>
<div class="a" style="left:412px;top:3px;width:2px;height:505px;background:#434a4f"></div>
<svg class="a" style="left:14px;top:81px" width="28" height="25" viewBox="0 0 28 25"><path d="M0 2 Q0 0 2 0 L11 0 L13.5 2.5 L26 2.5 Q28 2.5 28 4.5 L28 23 Q28 25 26 25 L2 25 Q0 25 0 23 Z" fill="#78909c"/><path d="M0 7 Q0 5 2 5 L11 5 L14 3.5 L26 3.5 Q28 3.5 28 5.5 L28 23 Q28 25 26 25 L2 25 Q0 25 0 23 Z" fill="#90a4ae"/><path d="M16 13 L21 13 L24 16 L24 22 L16 22 Z" fill="#fff"/></svg>
<div class="t" style="left:51px;top:86.00px;font-size:13px;color:#1f1f1f;letter-spacing:-0.2px">Documents</div>
<svg class="a" style="left:13.5px;top:116.5px" width="30" height="30" viewBox="0 0 30 30"><path d="M6.09 15.00 a8.91 8.91 0 1 0 17.82 0 a8.91 8.91 0 1 0 -17.82 0Z M7.85 11.53 L1.73 11.81 L1.37 15.84 L7.36 17.18Z M7.83 18.43 L4.23 23.39 L7.16 26.18 L11.94 22.33Z M13.21 22.74 L14.84 28.65 L18.85 28.10 L18.82 21.97Z M19.94 21.23 L25.57 23.64 L27.64 20.15 L22.83 16.36Z M13.26 7.25 L9.22 2.63 L5.85 4.87 L8.53 10.38Z" fill="#d3d3d3"/><circle cx="16.10" cy="14.80" r="8.60" fill="#3b86e3"/><g fill="none" stroke="#fff" stroke-width="0.90"><circle cx="16.10" cy="14.80" r="6.36"/><ellipse cx="16.10" cy="14.80" rx="2.92" ry="6.36" transform="rotate(-45 16.10 14.80)"/><path d="M11.63 10.33 L20.57 19.27 M11.63 19.27 L20.57 10.33"/></g></svg>
<div class="t" style="left:51px;top:117.30px;font-size:13px;color:#1f1f1f;letter-spacing:-0.3px">Web Browser</div>
<div class="t" style="left:51px;top:135.74px;font-size:12px;color:#7d8a93;">Konqueror</div>
<svg class="a" style="left:14px;top:159px" width="28" height="28" viewBox="-14 -14 28 28"><g fill="#546e7a"><circle r="10"/><rect x="-3.3" y="-14" width="6.6" height="6" rx="1" transform="rotate(0)"/><rect x="-3.3" y="-14" width="6.6" height="6" rx="1" transform="rotate(45)"/><rect x="-3.3" y="-14" width="6.6" height="6" rx="1" transform="rotate(90)"/><rect x="-3.3" y="-14" width="6.6" height="6" rx="1" transform="rotate(135)"/><rect x="-3.3" y="-14" width="6.6" height="6" rx="1" transform="rotate(180)"/><rect x="-3.3" y="-14" width="6.6" height="6" rx="1" transform="rotate(225)"/><rect x="-3.3" y="-14" width="6.6" height="6" rx="1" transform="rotate(270)"/><rect x="-3.3" y="-14" width="6.6" height="6" rx="1" transform="rotate(315)"/></g><circle r="4.8" fill="#fff"/></svg>
<div class="t" style="left:51px;top:166.20px;font-size:13px;color:#1f1f1f;letter-spacing:-0.25px">Control panel</div>
<svg class="a" style="left:14px;top:201px" width="28" height="25" viewBox="0 0 28 25"><rect width="28" height="25" rx="2" fill="#455a64"/><text x="3" y="9" font-size="7" fill="#fff" font-family="Liberation Mono" font-weight="bold">$</text><rect x="8.5" y="8" width="4" height="1.2" fill="#fff"/></svg>
<div class="t" style="left:51px;top:196.70px;font-size:13px;color:#1f1f1f;">Terminal</div>
<div class="t" style="left:51px;top:215.34px;font-size:12px;color:#7d8a93;">Konsole</div>
<div class="a" style="left:22px;top:415px;width:170px;height:1px;background:#b4b9bc"></div>
<svg class="a" style="left:21px;top:431px" width="15" height="15" viewBox="0 0 15 15"><g fill="#111"><rect y="1" width="14" height="2"/><rect y="5" width="14" height="2"/><rect y="9" width="14" height="2"/><rect y="13" width="14" height="2"/></g></svg>
<div class="t" style="left:52px;top:432.00px;font-size:13px;font-weight:bold;color:#1f1f1f;letter-spacing:-0.1px;color:#111">Applications</div>
<svg class="a" style="left:186px;top:429px" width="8" height="10"><path d="M0 0 L7 5 L0 10 Z" fill="#111"/></svg>
<svg class="a" style="left:228px;top:82px" width="20" height="18" viewBox="0 0 28 25"><path d="M0 2 Q0 0 2 0 L11 0 L13.5 2.5 L26 2.5 Q28 2.5 28 4.5 L28 23 Q28 25 26 25 L2 25 Q0 25 0 23 Z" fill="#78909c"/><path d="M0 7 Q0 5 2 5 L11 5 L14 3.5 L26 3.5 Q28 3.5 28 5.5 L28 23 Q28 25 26 25 L2 25 Q0 25 0 23 Z" fill="#90a4ae"/><path d="M16 13 L21 13 L24 16 L24 22 L16 22 Z" fill="#fff"/></svg>
<div class="t" style="left:262px;top:75.20px;font-size:13px;font-weight:bold;color:#1f1f1f;letter-spacing:-0.3px;color:#111">My Documents</div>
<div class="t" style="left:262px;top:93.54px;font-size:12px;color:#7d8a93;width:136px;overflow:hidden;-webkit-mask-image:linear-gradient(90deg,#000 70%,transparent 100%)">/home/adminu/Dokumenty</div>
<svg class="a" style="left:228px;top:119px" width="21" height="20" viewBox="0 0 21 20"><rect x="0.5" y="0" width="20" height="13.5" rx="1" fill="#dfe3e5"/><rect x="2" y="1.5" width="17" height="10.5" fill="#434c52"/><rect x="1" y="13.5" width="19" height="2" fill="#c9cfd2"/><rect x="5" y="15.5" width="11" height="3" fill="#b4bdc2"/></svg>
<div class="t" style="left:262px;top:111.20px;font-size:13px;font-weight:bold;color:#1f1f1f;letter-spacing:-0.3px;color:#111">My Computer</div>
<div class="t" style="left:262px;top:129.44px;font-size:12px;color:#7d8a93;">system:/</div>
<svg class="a" style="left:228px;top:154px" width="20" height="18" viewBox="0 0 28 25"><path d="M0 2 Q0 0 2 0 L11 0 L13.5 2.5 L26 2.5 Q28 2.5 28 4.5 L28 23 Q28 25 26 25 L2 25 Q0 25 0 23 Z" fill="#78909c"/><path d="M0 7 Q0 5 2 5 L11 5 L14 3.5 L26 3.5 Q28 3.5 28 5.5 L28 23 Q28 25 26 25 L2 25 Q0 25 0 23 Z" fill="#90a4ae"/><path d="M16 14 L21 14 L21 11.5 L25 15 L21 18.5 L21 16 L16 16 Z M21 18 L16 18 L16 15.5 L12 19 L16 22.5 L16 20 L21 20 Z" fill="#fff"/></svg>
<div class="t" style="left:262px;top:146.80px;font-size:13px;font-weight:bold;color:#1f1f1f;letter-spacing:-0.3px;color:#111">Network Folders</div>
<div class="t" style="left:262px;top:165.34px;font-size:12px;color:#7d8a93;">remote:/</div>
<div class="a" style="left:232px;top:187px;width:160px;height:1px;background:#98aab2"></div>
<svg class="a" style="left:227px;top:201px" width="23" height="22" viewBox="0 0 34 30"><path d="M9 6 L9 2 Q9 1 10 1 L19 1 Q20 1 20 2 L20 6 L18 6 L18 3 L11 3 L11 6 Z" fill="#8d6e5c"/><rect x="1" y="6" width="28" height="19" rx="1.5" fill="#8d6e5c"/><circle cx="24" cy="21.5" r="7.8" fill="#3b86e3"/><path d="M22.8 16.5 L25.2 16.5 L25.2 20.5 L27.5 20.5 L24 24 L20.5 20.5 L22.8 20.5 Z" fill="#fff"/><rect x="20.6" y="25.2" width="6.8" height="1.2" fill="#fff"/></svg>
<div class="t" style="left:261px;top:195.00px;font-size:13px;color:#1f1f1f;letter-spacing:-0.15px">Install Applications</div>
<div class="t" style="left:261px;top:213.54px;font-size:12px;color:#7d8a93;letter-spacing:-0.3px">Q4OS Software Centre</div>
<svg class="a" style="left:225px;top:231.5px" width="28" height="28" viewBox="0 0 28 28"><path d="M5.75 14.00 a8.25 8.25 0 1 0 16.50 0 a8.25 8.25 0 1 0 -16.50 0Z M7.38 10.79 L1.71 11.04 L1.38 14.78 L6.92 16.02Z M7.36 17.17 L4.03 21.76 L6.74 24.35 L11.16 20.79Z M12.34 21.17 L13.85 26.64 L17.57 26.13 L17.54 20.45Z M18.57 19.77 L23.79 22.00 L25.70 18.77 L21.25 15.25Z M12.39 6.82 L8.65 2.55 L5.53 4.62 L8.01 9.72Z" fill="#d3d3d3"/><circle cx="14.50" cy="13.90" r="7.70" fill="#3b86e3"/><g fill="none" stroke="#fff" stroke-width="0.85"><circle cx="14.50" cy="13.90" r="5.70"/><ellipse cx="14.50" cy="13.90" rx="2.62" ry="5.70" transform="rotate(-45 14.50 13.90)"/><path d="M10.50 9.90 L18.50 17.90 M10.50 17.90 L18.50 9.90"/></g></svg>
<div class="t" style="left:261px;top:231.00px;font-size:13px;color:#1f1f1f;letter-spacing:-0.3px">Web Browser</div>
<div class="t" style="left:261px;top:249.24px;font-size:12px;color:#7d8a93;">Konqueror</div>
<svg class="a" style="left:228px;top:273px" width="20" height="20" viewBox="-14 -14 28 28"><g fill="#546e7a"><circle r="10"/><rect x="-3.3" y="-14" width="6.6" height="6" rx="1" transform="rotate(0)"/><rect x="-3.3" y="-14" width="6.6" height="6" rx="1" transform="rotate(45)"/><rect x="-3.3" y="-14" width="6.6" height="6" rx="1" transform="rotate(90)"/><rect x="-3.3" y="-14" width="6.6" height="6" rx="1" transform="rotate(135)"/><rect x="-3.3" y="-14" width="6.6" height="6" rx="1" transform="rotate(180)"/><rect x="-3.3" y="-14" width="6.6" height="6" rx="1" transform="rotate(225)"/><rect x="-3.3" y="-14" width="6.6" height="6" rx="1" transform="rotate(270)"/><rect x="-3.3" y="-14" width="6.6" height="6" rx="1" transform="rotate(315)"/></g><circle r="4.8" fill="#fff"/></svg>
<div class="t" style="left:261px;top:276.30px;font-size:13px;color:#1f1f1f;letter-spacing:-0.25px">Control panel</div>
<svg class="a" style="left:228px;top:309px" width="21" height="21" viewBox="0 0 21 21"><circle cx="10.5" cy="10.5" r="10" fill="#00838f"/><circle cx="11.5" cy="9" r="3.7" fill="none" stroke="#fff" stroke-width="1.7"/><path d="M9 11.5 L5.5 15" stroke="#fff" stroke-width="2"/></svg>
<div class="t" style="left:261px;top:312.20px;font-size:13px;color:#1f1f1f;letter-spacing:-0.5px">Find Files/Folders</div>
<svg class="a" style="left:228px;top:345px" width="21" height="23" viewBox="0 0 21 23"><g fill="#111" transform="translate(13 15)"><circle r="5.2"/><rect x="-1.8" y="-7.5" width="3.6" height="3.5" transform="rotate(0)"/><rect x="-1.8" y="-7.5" width="3.6" height="3.5" transform="rotate(45)"/><rect x="-1.8" y="-7.5" width="3.6" height="3.5" transform="rotate(90)"/><rect x="-1.8" y="-7.5" width="3.6" height="3.5" transform="rotate(135)"/><rect x="-1.8" y="-7.5" width="3.6" height="3.5" transform="rotate(180)"/><rect x="-1.8" y="-7.5" width="3.6" height="3.5" transform="rotate(225)"/><rect x="-1.8" y="-7.5" width="3.6" height="3.5" transform="rotate(270)"/><rect x="-1.8" y="-7.5" width="3.6" height="3.5" transform="rotate(315)"/></g><circle cx="13" cy="15" r="2.2" fill="#b3e5fc"/><g fill="#111" transform="translate(5 4.5)"><circle r="3"/><rect x="-1.2" y="-4.5" width="2.4" height="2.2" transform="rotate(0)"/><rect x="-1.2" y="-4.5" width="2.4" height="2.2" transform="rotate(45)"/><rect x="-1.2" y="-4.5" width="2.4" height="2.2" transform="rotate(90)"/><rect x="-1.2" y="-4.5" width="2.4" height="2.2" transform="rotate(135)"/><rect x="-1.2" y="-4.5" width="2.4" height="2.2" transform="rotate(180)"/><rect x="-1.2" y="-4.5" width="2.4" height="2.2" transform="rotate(225)"/><rect x="-1.2" y="-4.5" width="2.4" height="2.2" transform="rotate(270)"/><rect x="-1.2" y="-4.5" width="2.4" height="2.2" transform="rotate(315)"/></g><circle cx="5" cy="4.5" r="1.2" fill="#b3e5fc"/></svg>
<div class="t" style="left:261px;top:347.90px;font-size:13px;color:#1f1f1f;letter-spacing:-0.3px">Run Command...</div>
<div class="a" style="left:232px;top:379px;width:160px;height:1px;background:#98aab2"></div>
<svg class="a" style="left:228px;top:392px" width="21" height="21" viewBox="0 0 21 21"><circle cx="10.5" cy="10.5" r="9.3" fill="#e8e8e8" stroke="#222" stroke-width="2"/><path d="M10.5 11 L6 7 M10.5 11 L15 7" stroke="#333" stroke-width="1.1"/><path d="M10.5 11 L10.5 19" stroke="#e06060" stroke-width="1.1"/></svg>
<div class="t" style="left:261px;top:396.00px;font-size:13px;color:#1f1f1f;">History</div>
<svg class="a" style="left:227px;top:428.5px" width="23" height="23" viewBox="0 0 24 24"><path d="M12 0.5 L15.2 8 L23.3 8.7 L17.2 14.1 L19 22 L12 17.8 L5 22 L6.8 14.1 L0.7 8.7 L8.8 8 Z" fill="#fdd230"/></svg>
<div class="t" style="left:261px;top:432.00px;font-size:13px;color:#1f1f1f;">&lt; <span style="margin-left:2px">Favorites</span></div>
<div class="a" style="left:6px;top:473px;width:150px;height:26px;background:#fff;border:2px solid #3daee9"></div>
<svg class="a" style="left:142px;top:483px" width="9" height="6"><path d="M0 0 L8 0 L4 5 Z" fill="#111"/></svg>
<div class="a" style="left:222px;top:470px;width:84px;height:32px;background:#fff;border:1px solid #d0d0d0"></div>
<svg class="a" style="left:240px;top:696px;top:477px" width="19" height="19" viewBox="0 0 19 19"><rect x="0.5" y="0.5" width="18" height="13.5" fill="#7d939e"/><rect x="0" y="13.5" width="19" height="2" fill="#d5dde0"/><rect x="3.5" y="15.5" width="12" height="3" fill="#b7c4ca"/><circle cx="9.5" cy="5.6" r="1.9" fill="#1c2529"/><path d="M8.6 6.5 L10.4 6.5 L11 10.5 L8 10.5 Z" fill="#1c2529"/></svg>
<div class="t" style="left:263px;top:479px;font-size:13px;color:#1f1f1f;letter-spacing:-0.4px">Lock</div>
<div class="a" style="left:310px;top:470px;width:97px;height:32px;background:#fff;border:1px solid #d0d0d0"></div>
<svg class="a" style="left:322px;top:693px;top:475px" width="22" height="22" viewBox="0 0 22 22"><circle cx="11" cy="11" r="10" fill="#90a4ae"/><circle cx="11" cy="11" r="7" fill="none" stroke="#eceff1" stroke-width="1.6"/><path d="M6.5 11 L15.5 11 M6.5 11 L9.5 8.2 M6.5 11 L9.5 13.8" stroke="#eceff1" stroke-width="1.6" fill="none"/></svg>
<div class="t" style="left:347.5px;top:478.5px;font-size:13.5px;color:#1f1f1f;letter-spacing:-0.35px">Turn Off</div>
</div>
<div id="tb" class="a">
<svg class="a" style="left:16.5px;top:1.5px" width="8" height="4"><path d="M0 4 L4 0 L8 4 Z" fill="#0c0c0c"/></svg>
<svg class="a" style="left:5px;top:5px" width="32" height="32" viewBox="0 0 32 32"><circle cx="16.06" cy="16.06" r="14.85" fill="#4a8cf0"/><circle cx="16.06" cy="16.06" r="8.9" fill="#f7f7f7"/><rect x="15.2" y="6.5" width="1.75" height="19" fill="#4a8cf0"/><rect x="6.5" y="15.2" width="19" height="1.75" fill="#4a8cf0"/><circle cx="16.06" cy="16.06" r="2.8" fill="#4a8cf0"/></svg>
<svg class="a" style="left:60px;top:10px" width="30" height="26" viewBox="0 0 30 26"><rect x="0" y="0" width="30" height="26" rx="1.5" fill="#03a9f4"/><path d="M0 1.5 Q0 0 1.5 0 L28.5 0 Q30 0 30 1.5 L30 4 L0 4 Z" fill="#4a4a4a"/></svg>
<svg class="a" style="left:97.5px;top:5.3px" width="32" height="32" viewBox="0 0 32 32"><path d="M6.36 16.00 a9.64 9.64 0 1 0 19.27 0 a9.64 9.64 0 1 0 -19.27 0Z M8.27 12.25 L1.65 12.55 L1.26 16.91 L7.73 18.35Z M8.24 19.70 L4.35 25.07 L7.52 28.09 L12.69 23.93Z M14.06 24.37 L15.83 30.76 L20.17 30.16 L20.13 23.54Z M21.34 22.74 L27.43 25.34 L29.67 21.57 L24.47 17.47Z M14.11 7.61 L9.75 2.62 L6.10 5.05 L9.01 11.00Z" fill="#d3d3d3"/><circle cx="16.20" cy="16.00" r="8.70" fill="#3b86e3"/><g fill="none" stroke="#fff" stroke-width="0.95"><circle cx="16.20" cy="16.00" r="6.44"/><ellipse cx="16.20" cy="16.00" rx="2.96" ry="6.44" transform="rotate(-45 16.20 16.00)"/><path d="M11.68 11.48 L20.72 20.52 M11.68 20.52 L20.72 11.48"/></g></svg>
<svg class="a" style="left:839.5px;top:18.5px" width="5" height="7"><path d="M5 0 L0 3.5 L5 7 Z" fill="#0c0c0c"/></svg>
<svg class="a" style="left:855px;top:11px" width="18" height="21" viewBox="0 0 18 21"><rect x="0.8" y="2.8" width="16.4" height="17.4" rx="1" fill="#f5f5f5" stroke="#a1887f" stroke-width="1.6"/><rect x="5.5" y="1" width="7" height="3.5" rx="1" fill="#d7ccc8"/></svg>
<svg class="a" style="left:880px;top:11px" width="22" height="20" viewBox="0 0 22 20"><path d="M8 2 L16 2 L16 -1 L21.5 5 L16 11 L16 8 L8 8 Z" fill="#90a4ae" transform="translate(0 2)"/><path d="M14 10 L6 10 L6 7 L0.5 13 L6 19 L6 16 L14 16 Z" fill="#cfd8dc" transform="translate(0 0)"/></svg>
<svg class="a" style="left:907px;top:11px" width="23" height="21" viewBox="0 0 23 21"><path d="M0.5 6.5 L5.5 6.5 L12 0.5 L12 20.5 L5.5 14.5 L0.5 14.5 Z" fill="#90a4ae"/><path d="M14 6 A4.5 4.5 0 0 1 14 15 Z" fill="#90a4ae"/><path d="M15.5 2 A8.8 8.8 0 0 1 15.5 19" fill="none" stroke="#90a4ae" stroke-width="2.3"/></svg>
<div class="t" style="left:951px;top:12.5px;font-size:17px;font-weight:bold;color:#e6e9ec;letter-spacing:-0.9px">09:18 am</div>
</div>
</body></html>
